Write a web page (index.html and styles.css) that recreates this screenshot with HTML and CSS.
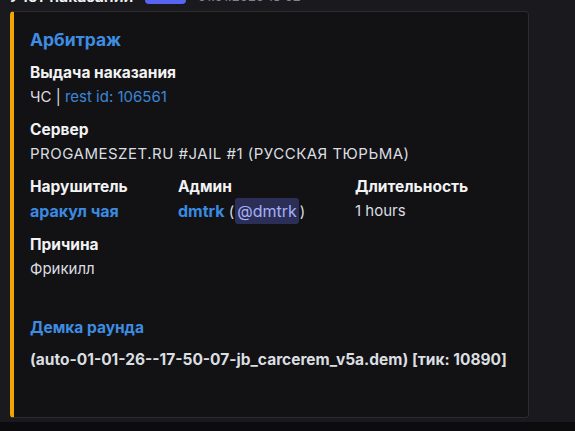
FILE: index.html
```html
<!DOCTYPE html>
<html lang="ru">
<head>
<meta charset="utf-8">
<link rel="stylesheet" href="styles.css">
</head>
<body>
<div class="page">
  <div class="msg-header">
    <span class="author">Учёт наказаний</span>
    <span class="badge">APP</span>
    <span class="time">01.01.2026 18:02</span>
  </div>
  <div class="embed">
    <div class="embed-title">Арбитраж</div>
    <div class="fields">
      <div class="field full">
        <div class="f-name">Выдача наказания</div>
        <div class="f-value">ЧС | <span class="link">rest id: 106561</span></div>
      </div>
      <div class="field full">
        <div class="f-name">Сервер</div>
        <div class="f-value caps">PROGAMESZET.RU #JAIL #1 (РУССКАЯ ТЮРЬМА)</div>
      </div>
      <div class="field">
        <div class="f-name">Нарушитель</div>
        <div class="f-value"><span class="strong-link">аракул чая</span></div>
      </div>
      <div class="field">
        <div class="f-name">Админ</div>
        <div class="f-value"><span class="strong-link">dmtrk</span> (<span class="mention">@dmtrk</span>)</div>
      </div>
      <div class="field">
        <div class="f-name">Длительность</div>
        <div class="f-value">1 hours</div>
      </div>
      <div class="field full">
        <div class="f-name">Причина</div>
        <div class="f-value">Фрикилл</div>
      </div>
    </div>
    <div class="demo">
      <div class="demo-title">Демка раунда</div>
      <div class="demo-line">(auto-01-01-26--17-50-07-jb_carcerem_v5a.dem) [тик: 10890]</div>
    </div>
  </div>
  <div class="bottom-bar"></div>
</div>
</body>
</html>
```

FILE: styles.css
```css
* { box-sizing: border-box; }
html, body {
  margin: 0;
  padding: 0;
  background: #1a1a1e;
  overflow: hidden;
}
body {
  font-family: Inter, "Noto Sans", sans-serif;
  color: #dbdee1;
  width: 575px;
  height: 431px;
}
.page {
  display: flex;
  flex-direction: column;
  height: 431px;
}
.msg-header {
  display: flex;
  align-items: center;
  gap: 8px;
  height: 22px;
  margin-top: -15px;
  padding-left: 9px;
  white-space: nowrap;
}
.author {
  font-size: 16px;
  font-weight: 600;
  color: #f2f3f5;
}
.badge {
  background: #5865f2;
  color: #fff;
  font-size: 10px;
  font-weight: 700;
  border-radius: 4px;
  padding: 2px 10px;
  margin-left: 4px;
}
.time {
  font-size: 13px;
  color: #80848e;
  margin-left: 4px;
}
.embed {
  margin-top: 4px;
  margin-left: 10px;
  width: 519px;
  height: 407px;
  background: #121214;
  border: 1px solid #2b2b30;
  border-left: 4px solid #f0a500;
  border-radius: 4px;
  padding: 17px 16px 0 16px;
  flex: none;
}
.embed-title {
  font-size: 17.5px;
  font-weight: 700;
  color: #3e8de3;
  line-height: 22px;
  margin-bottom: 12px;
}
.fields {
  display: grid;
  grid-template-columns: 148px 177px 1fr;
  row-gap: 13px;
}
.field.full { grid-column: 1 / -1; }
.f-name {
  font-size: 15.5px;
  font-weight: 700;
  color: #f2f3f5;
  line-height: 20px;
}
.f-value {
  font-size: 15px;
  line-height: 20px;
  margin-top: 4px;
  color: #dbdee1;
}
.f-value.caps { letter-spacing: 0.5px; }
.link { color: #3b86d9; }
.strong-link { color: #3b8ae0; font-weight: 700; font-size: 16px; }
.mention {
  background: #2b2f58;
  color: #a7b0f6;
  border-radius: 3px;
  padding: 3px 2px;
  margin: 0 1px;
  font-size: 16px;
}
.demo { margin-top: 39px; }
.demo-title {
  font-size: 15.5px;
  font-weight: 700;
  color: #3e8de3;
  line-height: 20px;
}
.demo-line {
  font-size: 15.5px;
  font-weight: 700;
  color: #dbdee1;
  line-height: 20px;
  margin-top: 12px;
}
.bottom-bar {
  margin-top: 4px;
  flex: 1;
  background: #0c0c0e;
}
```
